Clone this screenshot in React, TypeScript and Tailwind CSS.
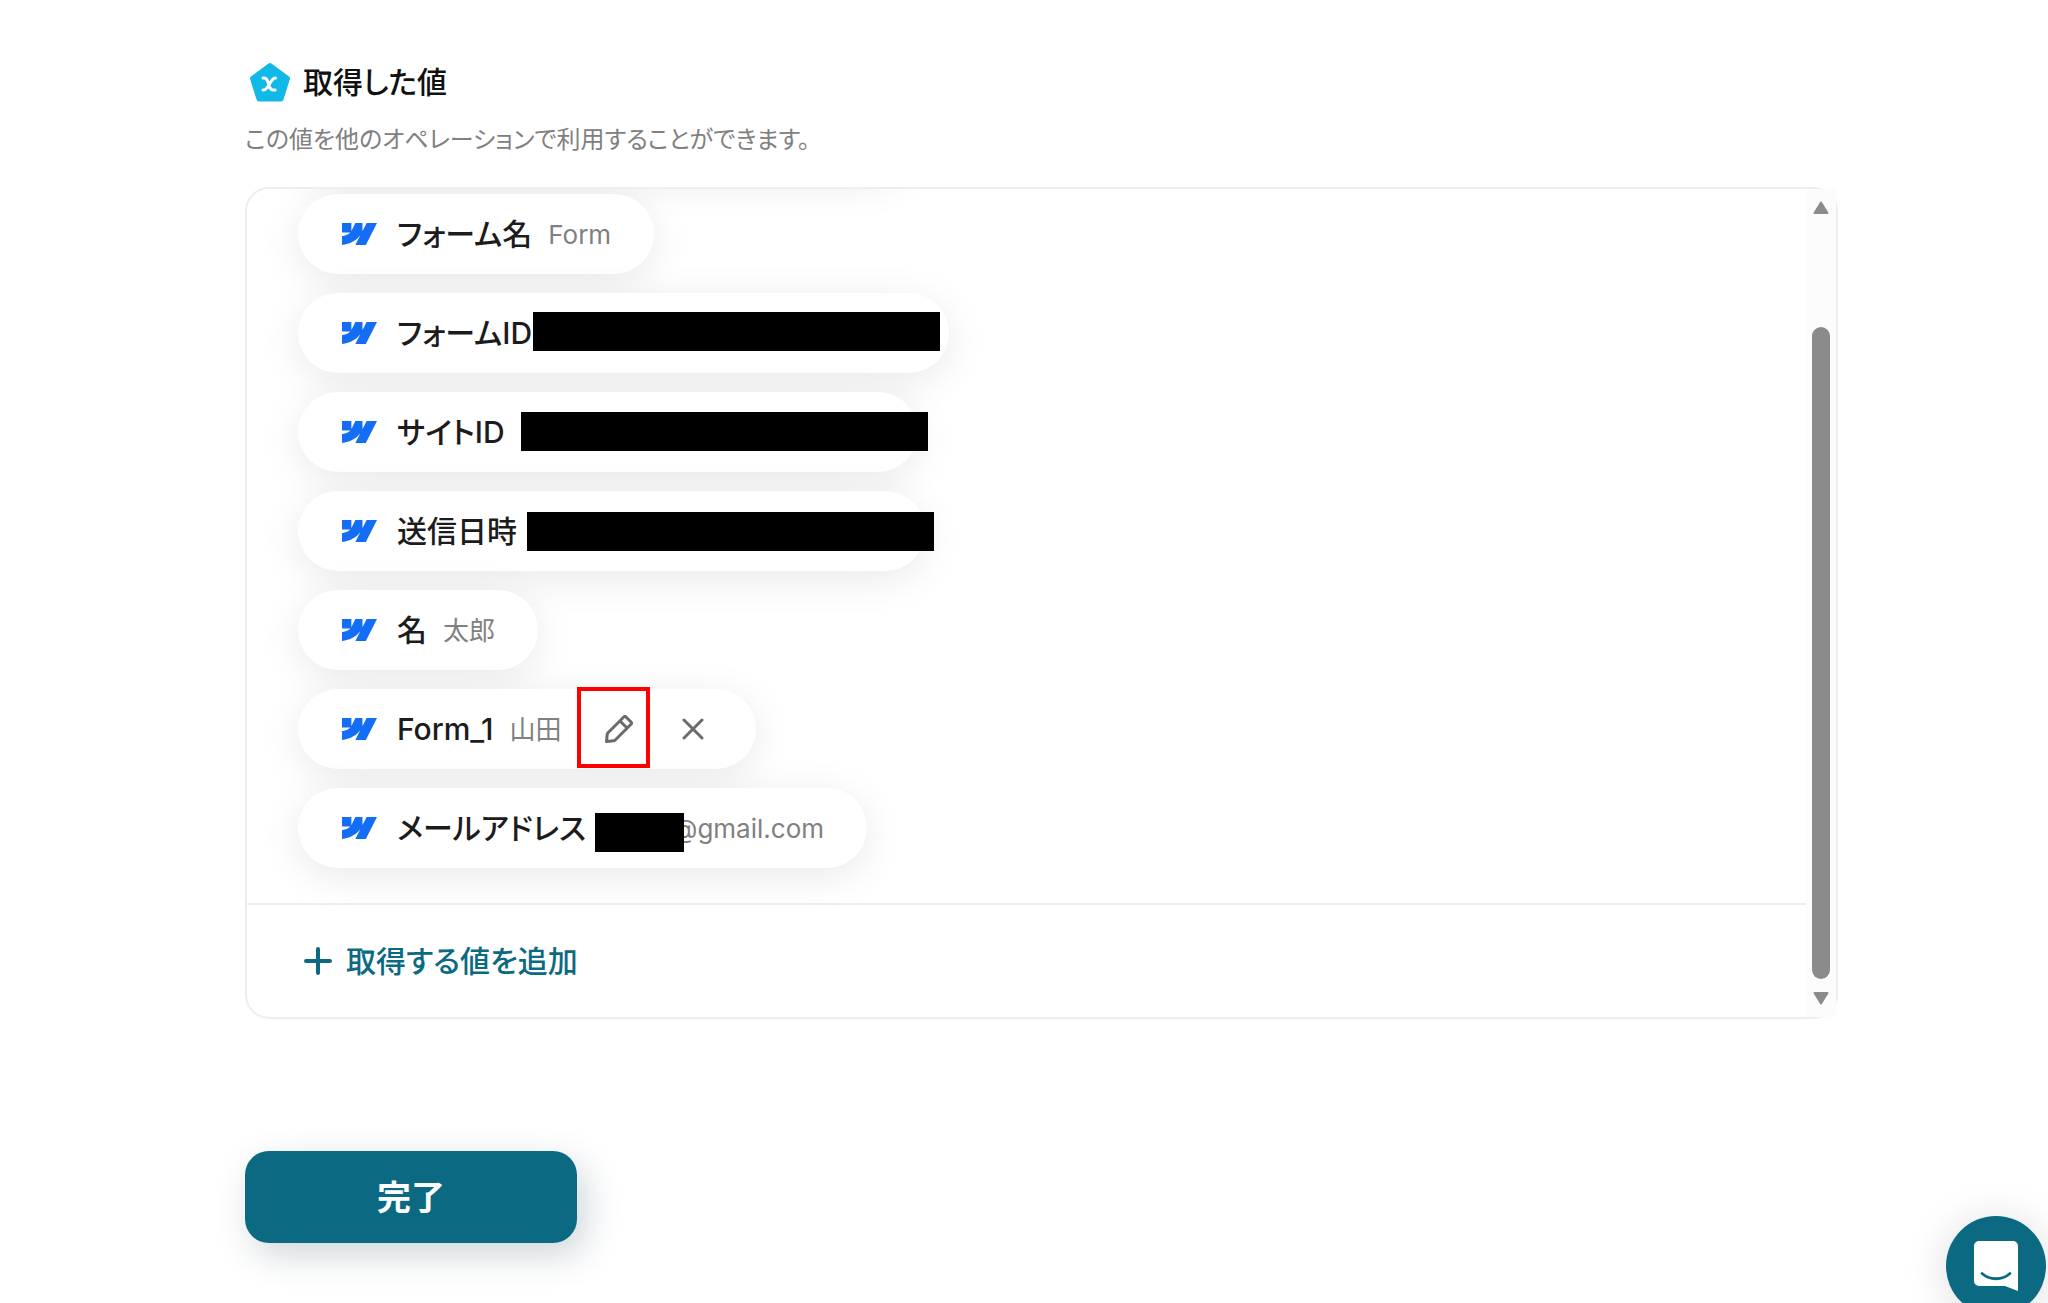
import type { ReactNode } from "react";

function WebflowMark() {
  return (
    <svg viewBox="0 4.5 24 15" className="h-[22px] w-[35px] shrink-0 fill-[#146ef5]" aria-hidden="true">
      <path d="m24 4.515-7.658 14.97H9.149l3.205-6.204h-.144C9.566 16.713 5.621 18.973 0 19.485v-6.118s3.596-.213 5.71-2.435H0V4.515h6.417v5.278l.144-.001 2.622-5.277h4.854v5.244h.144l2.72-5.244H24Z" />
    </svg>
  );
}

function ValueIcon() {
  return (
    <svg viewBox="0 0 42 40" className="h-10 w-[42px] shrink-0" aria-hidden="true">
      <path
        d="M21 3.500 38.500 16.500 32 37H10L3.500 16.500Z"
        fill="#10b9e8"
        stroke="#10b9e8"
        strokeWidth="5"
        strokeLinejoin="round"
      />
      <path
        d="M14 16h1c2 0 2.800 1 3.600 3l2 6c.8 2 1.600 3 3.600 3h2M26.500 16c-2.500 0-3.300 1.500-6 6s-3.500 6-6.500 6"
        fill="none"
        stroke="#fff"
        strokeWidth="3"
        strokeLinecap="round"
      />
    </svg>
  );
}

function PencilIcon() {
  return (
    <svg
      viewBox="0 0 28 28"
      className="size-7 shrink-0 fill-none stroke-[#6b6b6b] stroke-3"
      strokeLinejoin="round"
      aria-hidden="true"
    >
      <path d="M1.500 26.500 2.200 19.300a2 2 0 0 1 .6-1.300L18.800 2a1.600 1.600 0 0 1 2.200 0l5 5a1.600 1.600 0 0 1 0 2.200L10 25.200a2 2 0 0 1-1.300.6Z" />
      <path d="m15.200 6.200 6.600 6.600" />
    </svg>
  );
}

function CloseIcon() {
  return (
    <svg
      viewBox="0 0 22 22"
      className="size-[22px] fill-none stroke-[#6b6b6b] stroke-3"
      strokeLinecap="round"
      aria-hidden="true"
    >
      <path d="m2 2 18 18M20 2 2 20" />
    </svg>
  );
}

function Pill({ label, children, size = "pr-[43px]" }: { label: string; children?: ReactNode; size?: string }) {
  return (
    <li
      className={`relative flex h-20 items-center rounded-full bg-white pl-11 shadow-[0_8px_40px_rgba(0,0,0,0.09)] ${size}`}
    >
      <WebflowMark />
      <span className="ml-5 whitespace-nowrap text-[30px] font-medium text-[#1c1c1c]">{label}</span>
      {children}
    </li>
  );
}

function Value({ children }: { children: ReactNode }) {
  return <span className="ml-4 whitespace-nowrap text-[26px] text-[#808080]">{children}</span>;
}

function Redaction({ place }: { place: string }) {
  return <span className={`absolute h-[39px] bg-black ${place}`} />;
}

export default function App() {
  return (
    <div
      className="relative min-h-screen overflow-hidden bg-white pl-[245px] pr-[210px] pt-[62px] font-['Inter','Noto_Sans_CJK_JP',sans-serif] [font-feature-settings:'palt']"
      lang="ja"
    >
      <header>
        <h1 className="flex h-10 items-center gap-3 pl-1 text-[30px] font-medium text-[#111]">
          <ValueIcon />
          取得した値
        </h1>
        <p className="mt-[18px] h-10 text-[24px] leading-10 text-[#808080]">
          この値を他のオペレーションで利用することができます。
        </p>
      </header>

      <section className="mt-[27px] flex rounded-[24px] border-2 border-[#eee]">
        <div className="min-w-0 grow overflow-hidden rounded-l-[22px]">
          <ul className="-mt-[94px] flex flex-col items-start gap-[19px] pb-[35px] pl-[51px]">
            <li aria-hidden="true" className="h-20 w-[610px] shrink-0 rounded-full shadow-[0_8px_40px_rgba(0,0,0,0.09)]" />
            <Pill label="フォーム名">
              <Value>Form</Value>
            </Pill>
            <Pill label="フォームID" size="w-[651px]">
              <Redaction place="left-[235px] top-[19px] w-[407px]" />
            </Pill>
            <Pill label="サイトID" size="w-[620px]">
              <Redaction place="left-[223px] top-5 w-[407px]" />
            </Pill>
            <Pill label="送信日時" size="w-[627px]">
              <Redaction place="left-[229px] top-[21px] w-[407px]" />
            </Pill>
            <Pill label="名">
              <Value>太郎</Value>
            </Pill>
            <Pill label="Form_1">
              <Value>山田</Value>
              <div className="ml-11 flex items-center gap-10">
                <button aria-label="編集" className="flex h-10 items-center justify-center">
                  <PencilIcon />
                </button>
                <button aria-label="削除" className="flex size-10 items-center justify-center">
                  <CloseIcon />
                </button>
              </div>
              <span className="pointer-events-none absolute -top-0.5 left-[279px] h-[81px] w-[73px] border-4 border-[#f00]" />
            </Pill>
            <Pill label="メールアドレス" size="w-[569px] pr-[43px]">
              <span className="ml-auto text-[26px] text-[#808080]">@gmail.com</span>
              <Redaction place="left-[297px] top-[25px] w-[89px]" />
            </Pill>
          </ul>
          <div className="border-t-2 border-[#eee]">
            <button className="flex h-28 items-center gap-3.5 pl-[57px] text-[30px] font-medium text-[#0b6a82]">
              <svg
                viewBox="0 0 28 28"
                className="size-7 fill-none stroke-[#0b6a82] stroke-4"
                strokeLinecap="round"
                aria-hidden="true"
              >
                <path d="M14 2v24M2 14h24" />
              </svg>
              取得する値を追加
            </button>
          </div>
        </div>
        <div className="flex w-[30px] shrink-0 flex-col items-center bg-[#fcfcfc] py-3" aria-hidden="true">
          <svg viewBox="0 0 16 13" className="h-[13px] w-4 fill-[#8b8b8b] stroke-[#8b8b8b] stroke-2" strokeLinejoin="round">
            <path d="M8 1.500 14.500 12h-13Z" />
          </svg>
          <span className="mb-[13px] mt-[113px] w-[18px] grow rounded-full bg-[#8b8b8b]" />
          <svg viewBox="0 0 16 13" className="h-[13px] w-4 fill-[#8b8b8b] stroke-[#8b8b8b] stroke-2" strokeLinejoin="round">
            <path d="M8 11.500 14.500 1h-13Z" />
          </svg>
        </div>
      </section>

      <button className="mb-[60px] mt-[132px] flex h-[92px] w-[332px] items-center justify-center rounded-[24px] bg-[#0b6a82] text-[34px] font-bold text-white shadow-[8px_12px_36px_rgba(20,50,70,0.2)]">
        完了
      </button>

      <button
        aria-label="チャット"
        className="absolute -bottom-[13px] right-0.5 flex size-[100px] items-center justify-center rounded-full bg-[#0b6a82] shadow-[0_4px_44px_rgba(0,0,0,0.14)]"
      >
        <svg viewBox="0 0 44 50" className="h-[50px] w-11" aria-hidden="true">
          <path d="M5 0h34a5 5 0 0 1 5 5v45l-13-5H5a5 5 0 0 1-5-5V5a5 5 0 0 1 5-5Z" fill="#fff" />
          <path d="M8 32.500c8 7 20 7 28 0" fill="none" stroke="#0b6a82" strokeWidth="2.800" strokeLinecap="round" />
        </svg>
      </button>
    </div>
  );
}
